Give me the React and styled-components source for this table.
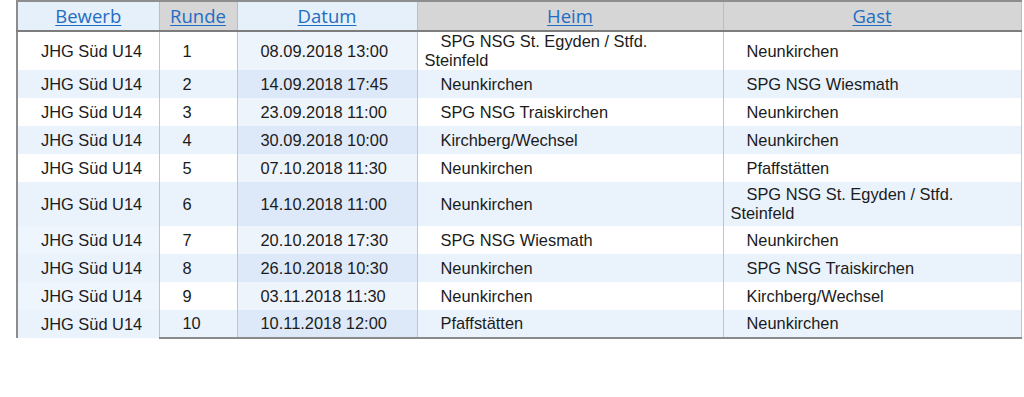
import React from 'react';
import styled, { createGlobalStyle } from 'styled-components';

const GlobalStyle = createGlobalStyle`
  body {
    margin: 0;
    background: #ffffff;
    font-family: "Liberation Sans", Arial, sans-serif;
  }
`;

const Page = styled.div`
  width: 1024px;
  height: 397px;
  padding-left: 16px;
  box-sizing: border-box;
  background: #ffffff;
`;

const Table = styled.table`
  width: 1004px;
  border-collapse: collapse;
  table-layout: fixed;
  border-left: 2px solid #8c8c8c;
`;

const HeadCell = styled.th`
  height: 28px;
  padding: 0;
  font-family: "Open Sans", "Noto Sans", sans-serif;
  font-weight: 400;
  font-size: 18.5px;
  line-height: 24px;
  text-align: center;
  background: ${(p) => (p.$tint ? '#e6f0fb' : '#d6d6d6')};
  border-top: 2px solid #8e8e8e;
  border-bottom: 2px solid #7d7d7d;
  border-right: 1px solid #bdbdbd;
`;

const HeadLink = styled.a`
  color: #1f6cc3;
  text-decoration: underline;
  text-underline-offset: 2px;
`;

const Row = styled.tr`
  background: ${(p) => (p.$even ? '#eaf2fc' : '#ffffff')};
`;

const Cell = styled.td`
  height: ${(p) => (p.$tall ? '38px' : '28px')};
  padding: 0 14px 0 7px;
  box-sizing: border-box;
  font-size: 16.4px;
  line-height: 19px;
  color: #1b1b1b;
  text-indent: 16px;
  vertical-align: middle;
  border-right: 1px solid #c4c4c4;
  border-bottom: ${(p) => (p.$last && !p.$first ? '2px solid #8a8a8a' : 'none')};
  background: ${(p) => p.$bg || 'transparent'};
`;

const columns = [
  { key: 'bewerb', title: 'Bewerb', width: 142, tint: true },
  { key: 'runde', title: 'Runde', width: 78 },
  { key: 'datum', title: 'Datum', width: 180, tint: true },
  { key: 'heim', title: 'Heim', width: 306 },
  { key: 'gast', title: 'Gast', width: 298 },
];

const games = [
  ['1', '08.09.2018 13:00', ['SPG NSG St. Egyden / Stfd.', 'Steinfeld'], 'Neunkirchen'],
  ['2', '14.09.2018 17:45', 'Neunkirchen', 'SPG NSG Wiesmath'],
  ['3', '23.09.2018 11:00', 'SPG NSG Traiskirchen', 'Neunkirchen'],
  ['4', '30.09.2018 10:00', 'Kirchberg/Wechsel', 'Neunkirchen'],
  ['5', '07.10.2018 11:30', 'Neunkirchen', 'Pfaffstätten'],
  ['6', '14.10.2018 11:00', 'Neunkirchen', ['SPG NSG St. Egyden / Stfd.', 'Steinfeld']],
  ['7', '20.10.2018 17:30', 'SPG NSG Wiesmath', 'Neunkirchen'],
  ['8', '26.10.2018 10:30', 'Neunkirchen', 'SPG NSG Traiskirchen'],
  ['9', '03.11.2018 11:30', 'Neunkirchen', 'Kirchberg/Wechsel'],
  ['10', '10.11.2018 12:00', 'Pfaffstätten', 'Neunkirchen'],
];

const Team = ({ name }) =>
  Array.isArray(name) ? (
    <>
      {name[0]}
      <br />
      {name[1]}
    </>
  ) : (
    name
  );

const App = () => (
  <Page>
    <GlobalStyle />
    <Table>
      <colgroup>
        {columns.map((c) => (
          <col key={c.key} style={{ width: c.width }} />
        ))}
      </colgroup>
      <thead>
        <tr>
          {columns.map((c) => (
            <HeadCell key={c.key} $tint={c.tint}>
              <HeadLink href="#">{c.title}</HeadLink>
            </HeadCell>
          ))}
        </tr>
      </thead>
      <tbody>
        {games.map(([runde, datum, heim, gast], i) => {
          const even = i % 2 === 1;
          const last = i === games.length - 1;
          const tall = i === 0;
          const bewerbBg = !even && i >= 5 ? '#eef5fd' : undefined;
          const datumBg = even ? '#dde9f9' : '#eef4fc';
          return (
            <Row key={runde} $even={even} style={i === 5 ? { height: 44 } : undefined}>
              <Cell $tall={tall} $last={last} $first $bg={bewerbBg}>JHG Süd U14</Cell>
              <Cell $tall={tall} $last={last}>{runde}</Cell>
              <Cell $tall={tall} $last={last} $bg={datumBg}>{datum}</Cell>
              <Cell $tall={tall} $last={last}><Team name={heim} /></Cell>
              <Cell $tall={tall} $last={last}><Team name={gast} /></Cell>
            </Row>
          );
        })}
      </tbody>
    </Table>
  </Page>
);

export default App;
